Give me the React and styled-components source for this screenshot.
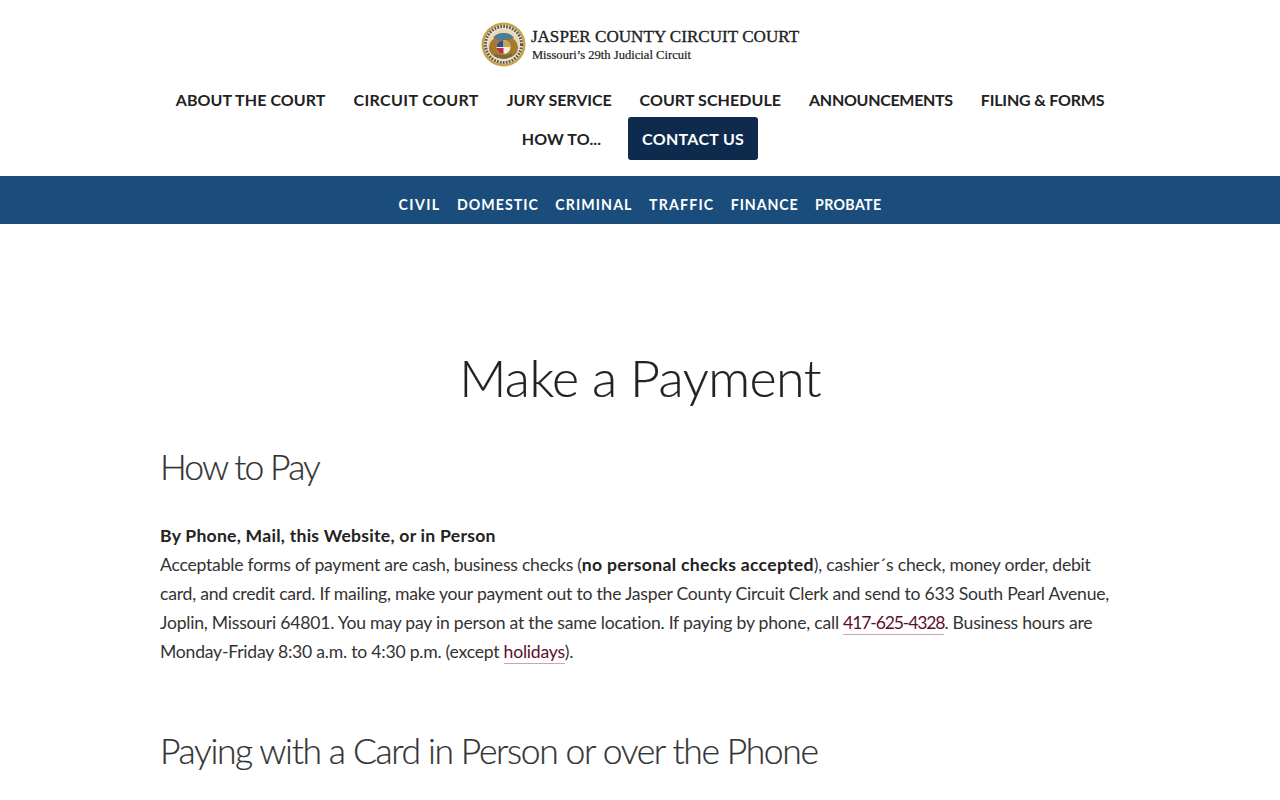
import React from 'react';
import styled, { createGlobalStyle } from 'styled-components';

const GlobalStyle = createGlobalStyle`
  html, body {
    margin: 0;
    padding: 0;
    background: #fff;
    overflow: hidden;
  }
  body {
    font-family: 'Lato', 'Open Sans', sans-serif;
    color: #222;
  }
`;

const Header = styled.header`
  display: flex;
  flex-direction: column;
  align-items: center;
  height: 176px;
`;

const Logo = styled.a`
  display: flex;
  align-items: center;
  gap: 5px;
  margin-top: 21px;
  height: 47px;
`;

const LogoText = styled.div`
  display: flex;
  flex-direction: column;
  padding-top: 2px;
  font-family: 'Liberation Serif', serif;
  color: #222;
  .name {
    font-size: 17.1px;
    line-height: 20px;
    -webkit-text-stroke: 0.35px #222;
  }
  .sub {
    font-size: 12.6px;
    line-height: 17px;
    padding-left: 1px;
    -webkit-text-stroke: 0.2px #222;
  }
`;

const MainNav = styled.nav`
  display: flex;
  flex-wrap: wrap;
  justify-content: center;
  align-items: center;
  width: 960px;
  margin-top: 15px;
`;

const NavItem = styled.a`
  display: block;
  padding: ${(p) => (p.$lead ? '0 27px 0 0' : '0 14px')};
  font-size: 16px;
  font-weight: 700;
  letter-spacing: ${(p) => p.$track || '0'};
  height: ${(p) => (p.$boxed ? '43px' : '34px')};
  line-height: ${(p) => (p.$boxed ? '43px' : '34px')};
  color: ${(p) => (p.$boxed ? '#fff' : '#222')};
  background: ${(p) => (p.$boxed ? '#0e2b4d' : 'transparent')};
  border-radius: ${(p) => (p.$boxed ? '3px' : '0')};
  white-space: nowrap;
`;

const SubNav = styled.nav`
  display: flex;
  justify-content: center;
  align-items: center;
  gap: 16.5px;
  height: 48px;
  padding-top: 8px;
  box-sizing: border-box;
  background: #1a4c7c;
`;

const SubItem = styled.a`
  font-size: 14.2px;
  font-weight: 700;
  letter-spacing: ${(p) => p.$track};
  color: #fff;
`;

const Main = styled.main`
  width: 960px;
  margin: 0 auto;
`;

const Title = styled.h1`
  margin: 119px 0 0;
  font-size: 52px;
  line-height: 68px;
  font-weight: 300;
  letter-spacing: -0.6px;
  text-align: center;
  color: #222;
  -webkit-text-stroke: 0.2px #222;
`;

const Heading = styled.h2`
  margin: ${(p) => p.$top} 0 0;
  font-size: 35.5px;
  line-height: 44px;
  font-weight: 300;
  letter-spacing: ${(p) => p.$track};
  color: #333;
  -webkit-text-stroke: 0.2px #333;
`;

const Paragraph = styled.p`
  margin: 32px 0 0;
  font-size: 17.6px;
  line-height: 29px;
  letter-spacing: -0.23px;
  color: #333;
  b {
    font-weight: 700;
    letter-spacing: 0.3px;
    color: #222;
  }
`;

const Lead = styled.b`
  && {
    letter-spacing: 0.25px;
  }
`;

const TextLink = styled.a`
  display: inline-block;
  line-height: 23px;
  letter-spacing: ${(p) => p.$track || 'inherit'};
  color: #5a0f2e;
  border-bottom: 1px solid #c4a9b5;
`;

const navLinks = [
  { label: 'ABOUT THE COURT', track: '0.07px' },
  { label: 'CIRCUIT COURT', track: '0.38px' },
  { label: 'JURY SERVICE', track: '-0.08px' },
  { label: 'COURT SCHEDULE', track: '0.07px' },
  { label: 'ANNOUNCEMENTS', track: '-0.3px' },
  { label: 'FILING & FORMS', track: '-0.2px' },
];

const subLinks = [
  { label: 'CIVIL', track: '1.4px' },
  { label: 'DOMESTIC', track: '1px' },
  { label: 'CRIMINAL', track: '1.1px' },
  { label: 'TRAFFIC', track: '1.15px' },
  { label: 'FINANCE', track: '0.9px' },
  { label: 'PROBATE', track: '0.35px' },
];

function Seal() {
  return (
    <svg width="45" height="45" viewBox="0 0 45 45">
      <circle cx="22.5" cy="22.5" r="22" fill="#c9a24a" />
      <circle cx="22.5" cy="22.5" r="19.500" fill="#f1ead6" />
      <circle cx="22.5" cy="22.5" r="18" fill="none" stroke="#5c5a50" strokeWidth="3" strokeDasharray="1.8 1.2" />
      <circle cx="22.5" cy="22.5" r="15.500" fill="#e6d9b4" />
      <path d="M8 25c1-7 6-11 14.500-11S36 18 37 25c0 6-3 10-14.500 12C11 35 8 31 8 25z" fill="#a8782e" />
      <path d="M12 16c3-4 6-5 10.500-5S30 12 33 16c-3 1-7 2-10.500 2S15 17 12 16z" fill="#4a7c92" />
      <circle cx="22.500" cy="25" r="7" fill="#f4f0e6" />
      <path d="M15.500 26h7v6a7 7 0 0 1-7-6z" fill="#b9313a" />
      <path d="M22.500 18a7 7 0 0 0-7 7h7z" fill="#2f4f8f" />
      <path d="M22.500 18a7 7 0 0 1 7 7h-7z" fill="#c9a24a" />
      <path d="M13 34c6 3.500 13 3.500 19 0l-1.500-2.500c-5 2.500-11 2.500-16 0z" fill="#7a6a38" />
    </svg>
  );
}

export default function App() {
  return (
    <>
      <GlobalStyle />
      <Header>
        <Logo>
          <Seal />
          <LogoText>
            <span className="name">JASPER COUNTY CIRCUIT COURT</span>
            <span className="sub">Missouri’s 29th Judicial Circuit</span>
          </LogoText>
        </Logo>
        <MainNav>
          {navLinks.map((l) => <NavItem key={l.label} $track={l.track}>{l.label}</NavItem>)}
          <NavItem $lead $track="0.1px">HOW TO...</NavItem>
          <NavItem $boxed $track="0.3px">CONTACT US</NavItem>
        </MainNav>
      </Header>
      <SubNav>
        {subLinks.map((l) => <SubItem key={l.label} $track={l.track}>{l.label}</SubItem>)}
      </SubNav>
      <Main>
        <Title>Make a Payment</Title>
        <Heading $top="34px" $track="-1.9px">How to Pay</Heading>
        <Paragraph>
          <Lead>By Phone, Mail, this Website, or in Person</Lead><br />
          Acceptable forms of payment are cash, business checks (<b>no personal checks accepted</b>), cashier´s check, money order, debit card, and credit card. If mailing, make your payment out to the Jasper County Circuit Clerk and send to 633 South Pearl Avenue, Joplin, Missouri 64801. You may pay in person at the same location. If paying by phone, call <TextLink $track="-1.15px">417-625-4328</TextLink>. Business hours are Monday-Friday 8:30 a.m. to 4:30 p.m. (except <TextLink>holidays</TextLink>).
        </Paragraph>
        <Heading $top="62.5px" $track="-1.38px">Paying with a Card in Person or over the Phone</Heading>
      </Main>
    </>
  );
}
